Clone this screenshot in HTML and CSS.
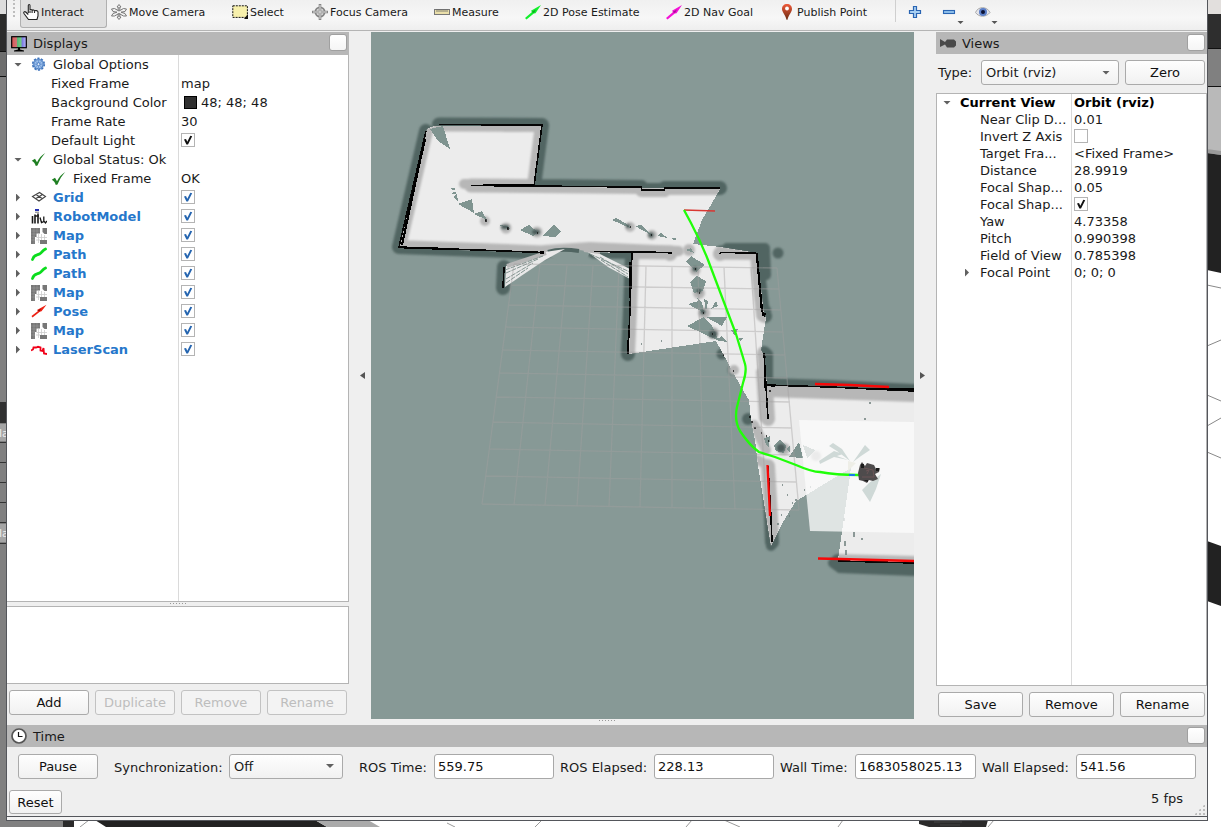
FILE: index.html
```html
<!DOCTYPE html>
<html lang="en">
<head>
<meta charset="utf-8">
<title>RViz</title>
<link rel="stylesheet" href="styles.css">
</head>
<body>
<svg class="defs" width="0" height="0">
  <defs>
    <symbol id="check" viewBox="0 0 14 14"><rect x=".5" y=".5" width="13" height="13" fill="#fff" stroke="#b4b4b4"/><path d="M3 6.400 5 6 6.300 8.800 9.300 2.800 11.200 3.200 7 11.400 5.400 11.400z" fill="currentColor"/></symbol>
    <symbol id="nocheck" viewBox="0 0 14 14"><rect x=".5" y=".5" width="13" height="13" fill="#fff" stroke="#b4b4b4"/></symbol>
    <symbol id="ok" viewBox="0 0 16 16"><path d="M.8 8.800 4 6.800 6 10.300C8 6.400 10.300 3.400 14.200 1 11.200 4.300 8.500 8.500 6.500 13.600L4.800 14C4 11.800 2.800 9.700.8 8.800z" fill="#1f7f22"/></symbol>
    <symbol id="map" viewBox="0 0 16 16"><path d="M0 0H9V5.500H5.500V9H4V16H0zM11.500 0H16V6H13.500L11.500 4zM9 12H16V16H9z" fill="#777"/><path d="M5.500 9.500H16M7.500 6V15M10.500 6V12M13.500 7V12M5 12H9" stroke="#ccc" fill="none" stroke-width=".8"/><path d="M0 3H9M0 6H5M0 9H4M0 12H4M3 0V16M6 0V5" stroke="#aaa" stroke-width=".4"/></symbol>
    <symbol id="path" viewBox="0 0 16 16"><path d="M1.500 12.500C3 7 5.500 8.500 8.500 7S11 3.500 14.500 2" fill="none" stroke="#0bdc1d" stroke-width="2.800" stroke-linecap="round"/></symbol>
    <symbol id="arrow" viewBox="0 0 16 16"><path d="M0 14 7 8 6 6.800 16 1 10.500 9.300 8.800 9.600 1.500 15.500z" fill="currentColor"/><path d="M6.500 8 11 5.500 9 9z" fill="#000" opacity=".3"/></symbol>
  </defs>
</svg>

<svg class="desktop" viewBox="0 0 1221 827">
  <rect width="1221" height="827" fill="#fff"/>
  <rect width="8" height="827" fill="#808080"/><rect width="8" height="14" fill="#ddd"/><rect y="14" width="8" height="37" fill="#2b2b2b"/><rect y="51" width="8" height="25" fill="#6e6e6e"/><path d="M0 51.500H7M0 76.500H7" stroke="#111"/>
  <rect y="402" width="8" height="21" fill="#303030"/><path d="M0 442.500H7M0 462.500H7M0 482.500H7M0 502.500H7M0 522.500H7M0 543.500H7" stroke="#333"/>
  <rect y="424" width="6" height="17" fill="#a5a5a5"/><rect y="524" width="6" height="18" fill="#a5a5a5"/>
  <text x="-1" y="437" class="scrap">la</text><text x="-1" y="537" class="scrap">la</text>
  <rect y="820" width="64" height="7" fill="#808080"/><rect x="63" y="820" width="11" height="7" fill="#2b2b2b"/>
  <path d="M95 820H315L327 827H106z" fill="#222"/><path d="M315 820H368L380 827H327z" fill="#aaa"/><path d="M80 827 89 820M447 823 455 827M535 827 542 820M686 827 692 820M724 820 740 827M838 827 843 820M988 827 994 820" fill="none" stroke="#999"/>
  <path d="M919 820H988L986 827H929L919 824z" fill="#2a2a2a"/><path d="M934 822h28M940 825h20" stroke="#444"/>
  <rect x="1207" width="14" height="14" fill="#e2dfdd"/><rect x="1207" y="14" width="14" height="35" fill="#2e2e2e"/><path d="M1207 48.500H1221M1207 86.500H1221" stroke="#111"/><rect x="1207" y="49" width="14" height="37" fill="#808080"/><path d="M1207 87H1221V154L1207 149z" fill="#b9b9b9"/><path d="M1207 149 1221 151V155L1207 153z" fill="#999"/><path d="M1207 153 1221 155V273L1207 270z" fill="#222"/>
  <path d="M1207 285 1221 288M1207 346 1221 340M1207 395 1221 401M1207 426 1221 418M1207 452 1221 458" stroke="#888"/><path d="M1207 541 1221 546V606L1207 601z" fill="#222"/>
</svg>

<div class="window">
  <header class="toolbar">
    <span class="handle"></span>
    <div class="tool active t1"><svg viewBox="0 0 16 16"><path d="M5.300 9V1.600C5.300.2 7 .2 7 1.600V6.500C7.200 5 9 5.200 9 6.700 9.500 5.500 11.500 5.700 11.500 7.200 12 6 15 6.500 15 8V12L14 15.500H5.500L1 9.500C.2 8 1.700 7 2.700 8L5.300 10.500M7 7V9M9.100 7V9M11.500 7.500V9" fill="#fff" stroke="#222" stroke-width="1.100"/></svg>Interact</div>
    <div class="tool t2"><svg viewBox="0 0 16 16"><path d="M8 .5 10 3H8.800V6.500M8 .5 6 3H7.200V6.500M8 15.500 10 13H8.800V9.500M8 15.500 6 13H7.200V9.500M.5 5 3.500 4.500 8 7 12.500 4.500 15.500 5 14 7.500 10 8.200 14 9.500 15.500 12 12.500 12 8 9.500 3.500 12 .5 12 2 9.500 6 8.200 2 7.500z" fill="#f2f2f2" stroke="#777"/></svg>Move Camera</div>
    <div class="tool t3"><svg viewBox="0 0 16 16"><rect x=".8" y="1.800" width="14.600" height="11.600" fill="#f7f0ac" stroke="#111" stroke-dasharray="2 1"/><path d="M16 10V15H12z" fill="#111"/></svg>Select</div>
    <div class="tool t4"><svg viewBox="0 0 16 16"><circle cx="8" cy="8" r="4.600" fill="#ddd" stroke="#858585" stroke-width="1.800"/><path d="M8 0V16M0 8H16" stroke="#858585" stroke-width="2.600"/><path d="M8 1V15M1 8H15" stroke="#e8e8e8" stroke-width=".9"/></svg>Focus Camera</div>
    <div class="tool t5"><svg viewBox="0 0 16 16"><rect x=".5" y="5.500" width="15" height="5" fill="#eadfaa" stroke="#777"/><path d="M3 5V8M5 5V8M7 5V8M9 5V8M11 5V8M13 5V8" stroke="#666" stroke-width=".8"/></svg>Measure</div>
    <div class="tool t6"><svg class="green" viewBox="0 0 16 16"><use href="#arrow"/></svg>2D Pose Estimate</div>
    <div class="tool t7"><svg class="magenta" viewBox="0 0 16 16"><use href="#arrow"/></svg>2D Nav Goal</div>
    <div class="tool t8"><svg viewBox="0 0 16 16"><defs><linearGradient id="pin" x2="0" y2="1"><stop stop-color="#ef5a3a"/><stop offset="1" stop-color="#6a2c12"/></linearGradient></defs><path d="M8 0C11 0 13 2 13 5 13 8 9.500 11 8.500 15.800H7.500C6.500 11 3 8 3 5 3 2 5 0 8 0z" fill="url(#pin)"/><circle cx="8" cy="4.500" r="1.900" fill="#fff"/></svg>Publish Point</div>
    <span class="rule"></span>
    <svg class="mini plus" viewBox="0 0 14 14"><path d="M5.500 1.500H8.500V5.500H12.500V8.500H8.500V12.500H5.500V8.500H1.500V5.500H5.500z" fill="#a9d0f2" stroke="#2a65b3" stroke-width="1.200"/></svg>
    <svg class="mini minus" viewBox="0 0 22 22"><rect x="1.500" y="7.500" width="11" height="3" fill="#8fc0ec" stroke="#2a65b3" stroke-width="1.100"/><path d="M15.500 18H21.500L18.500 21z" fill="#555"/></svg>
    <svg class="mini eye" viewBox="0 0 24 22"><path d="M1.500 9.500C4 3 13 3 16 9.500 12 14.500 5 14.500 1.500 9.500z" fill="#e4e4ea" stroke="#aaa"/><circle cx="9" cy="9" r="4" fill="#5b7fc8"/><circle cx="9" cy="9" r="2" fill="#0c1233"/><path d="M17.500 18H23.500L20.500 21z" fill="#555"/></svg>
  </header>

  <main class="workspace">
    <section class="dock displays">
      <div class="title"><svg viewBox="0 0 16 16"><defs><linearGradient id="rgb"><stop stop-color="#d55"/><stop offset=".35" stop-color="#c77"/><stop offset=".4" stop-color="#5b7"/><stop offset=".65" stop-color="#7c8"/><stop offset=".7" stop-color="#77d"/><stop offset="1" stop-color="#bbf"/></linearGradient></defs><rect x=".7" y=".7" width="14.600" height="11" fill="url(#rgb)" stroke="#000" stroke-width="1.200"/><path d="M7 12H9V13.500L13 14.500V15.500H3V14.500L7 13.500z" fill="#000"/></svg><span>Displays</span><i class="box"></i></div>
      <div class="tree left-tree">
        <div class="row"><i class="down"></i><svg class="ico" viewBox="0 0 16 16"><circle cx="7.500" cy="7.200" r="5.800" fill="#9dc0ec" stroke="#3c72bb" stroke-width="1.600" stroke-dasharray="2.200 1.440"/><circle cx="7.500" cy="7.200" r="4.600" fill="#9dc0ec" stroke="#5080c0"/><path d="M7.500 3V11.400M3.300 7.200H11.700M4.500 4.200 10.500 10.200M10.500 4.200 4.500 10.200" stroke="#6592d0" stroke-width=".8"/><circle cx="7.500" cy="7.200" r="1.500" fill="#e5effb" stroke="#4a7fc6"/></svg><span class="name">Global Options</span></div>
        <div class="row prop"><span class="name">Fixed Frame</span><span class="value">map</span></div>
        <div class="row prop"><span class="name">Background Color</span><span class="value"><i class="swatch"></i>48; 48; 48</span></div>
        <div class="row prop"><span class="name">Frame Rate</span><span class="value">30</span></div>
        <div class="row prop"><span class="name">Default Light</span><span class="value"><svg class="cb dark"><use href="#check"/></svg></span></div>
        <div class="row"><i class="down"></i><svg class="ico"><use href="#ok"/></svg><span class="name">Global Status: Ok</span></div>
        <div class="row sub"><svg class="ico"><use href="#ok"/></svg><span class="name">Fixed Frame</span><span class="value">OK</span></div>
        <div class="row display"><i class="right"></i><svg class="ico" viewBox="0 0 16 16"><path d="M1.500 6.500 8.500 2.500 14.500 6.500 8 11zM5 4.500 11.500 8.700M11.500 4.500 4.500 8.700" fill="none" stroke="#444" stroke-width="1.100"/></svg><span class="name">Grid</span><span class="value"><svg class="cb"><use href="#check"/></svg></span></div>
        <div class="row display"><i class="right"></i><svg class="ico" viewBox="0 0 16 16"><path d="M4 0H8V2H4z" fill="#2330b0"/><path d="M4 3.200H8" stroke="#777"/><path d="M1.500 7V14.500M4 5.500V14.500M7 4.500V14.500M4 7H8" stroke="#181818" stroke-width="1.600"/><path d="M9 8.500 10.500 13.500 12.800 12.500V7.500M12.800 12 14.500 14 16 12" stroke="#181818" stroke-width="1.300" fill="none"/></svg><span class="name">RobotModel</span><span class="value"><svg class="cb"><use href="#check"/></svg></span></div>
        <div class="row display"><i class="right"></i><svg class="ico"><use href="#map"/></svg><span class="name">Map</span><span class="value"><svg class="cb"><use href="#check"/></svg></span></div>
        <div class="row display"><i class="right"></i><svg class="ico"><use href="#path"/></svg><span class="name">Path</span><span class="value"><svg class="cb"><use href="#check"/></svg></span></div>
        <div class="row display"><i class="right"></i><svg class="ico"><use href="#path"/></svg><span class="name">Path</span><span class="value"><svg class="cb"><use href="#check"/></svg></span></div>
        <div class="row display"><i class="right"></i><svg class="ico"><use href="#map"/></svg><span class="name">Map</span><span class="value"><svg class="cb"><use href="#check"/></svg></span></div>
        <div class="row display"><i class="right"></i><svg class="ico red" viewBox="0 0 16 16"><path d="M.5 12 7 7 6 6 15.500.8 10.500 7.300 8.800 7.800 1.500 13.500z" fill="currentColor"/><path d="M6.500 6.500 10 4.500 8.500 7.500z" fill="#500" opacity=".6"/></svg><span class="name">Pose</span><span class="value"><svg class="cb"><use href="#check"/></svg></span></div>
        <div class="row display"><i class="right"></i><svg class="ico"><use href="#map"/></svg><span class="name">Map</span><span class="value"><svg class="cb"><use href="#check"/></svg></span></div>
        <div class="row display"><i class="right"></i><svg class="ico" viewBox="0 0 16 16"><path d="M0 8.500 2 7.500 2.500 5.500 5 5.500 7 4.800 9.500 5.500 9.500 8.500 11.500 9 12.500 6 13 11.500 16 12" fill="none" stroke="#f00018" stroke-width="1.800"/></svg><span class="name">LaserScan</span><span class="value"><svg class="cb"><use href="#check"/></svg></span></div>
      </div>
      <div class="grip"></div>
      <div class="info"></div>
      <div class="buttons"><button>Add</button><button disabled>Duplicate</button><button disabled>Remove</button><button disabled>Rename</button></div>
    </section>
    <div class="splitter"><i class="fold-left"></i></div>

    <svg class="scene" viewBox="371 32 543 687">
      <defs>
        <path id="walls" d="M439 124.500 542 125 534 186M471 185.500 641 187 642 190H664L665 188 720 188M426 131 399 247 543 252.500M594 251.500 671 252.500 670 254M632 252.500 630 310 628 354M720 254 721 252.500 756 253M757 253 759 280 763 315 765 316M764 353 768 419M766 385 830 387 914 391M768 466 771 517 772 542M838 561 914 563M504 267 503 288"/>
        <path id="free" d="M427 129 434 126 541 126 534 186 641 188 720 189 708 210 702 220 693 244 720 247 757 253 764 315 766 318 761 350 764 355 767 385 914 391V563L838 560 851 468 824 484 808 494 796 501 783 522 771 546 758 466 755 440 751 420 749 400 740 385 716 341 629 354 632 253 584 252 545 253 399 248z"/>
        <clipPath id="freeclip"><use href="#free"/></clipPath>
        <filter id="soft"><feGaussianBlur stdDeviation=".8"/></filter>
      </defs>
      <rect x="371" y="32" width="543" height="687" fill="#879996"/>
      <g filter="url(#soft)"><use href="#walls" fill="none" stroke="#516562" stroke-width="14" stroke-linecap="round" stroke-linejoin="round"/>
        <path d="M727 248H765M765 249 766 275M766 310V317M768 354V380M833 563 840 568 914 571M545 252H574M771 530V546" fill="none" stroke="#516562" stroke-width="10" stroke-linecap="round"/>
        <circle cx="778" cy="253" r="5.500" fill="#516562"/><circle cx="722" cy="354" r="5.500" fill="#516562"/><circle cx="733" cy="370" r="5.500" fill="#647673"/><circle cx="748" cy="419" r="6" fill="#516562"/></g>
      <use href="#free" fill="#ececec" shape-rendering="crispEdges"/>
      <g clip-path="url(#freeclip)"><g filter="url(#soft)"><use href="#walls" fill="none" stroke="#b7b7b7" stroke-width="14" stroke-linecap="round" stroke-linejoin="round"/>
        <path d="M545 250 590 247 679 251M767 392 914 397M464 184H480M505 127H520M754 425 766 450M761 372 764 418M758 460 767 465" fill="none" stroke="#b7b7b7" stroke-width="10" stroke-linecap="round"/></g></g>
      <path d="M545 254Q570 246 590 252L585 262 560 262z" fill="#879996"/><path d="M548 252Q560 248 579 251" stroke="#516562" stroke-width="4" fill="none"/>
      <path d="M506 266 545 252 565 249 545 260 524 274 505 287zM585 250 596 252 630 269V279L608 267z" fill="#e9e9e9"/>
      <path d="M507 266 546 253M584 250 600 252" stroke="#b7b7b7" stroke-width="4"/>
      <path d="M506 273 538 259M506 279 533 263M506 283 528 268M505 270 543 256M600 257 628 274M601 260 628 277M590 254 630 272" stroke="#788c88" stroke-width=".9" stroke-dasharray="5 1"/>
      <g fill="#b7b7b7" filter="url(#soft)"><circle cx="485" cy="221" r="5"/><circle cx="506" cy="228" r="5.500"/><circle cx="537" cy="232" r="5.500"/><circle cx="630" cy="227" r="5"/><circle cx="652" cy="235" r="5"/><circle cx="689" cy="250" r="6"/><circle cx="695" cy="270" r="5.500"/><circle cx="699" cy="293" r="6"/><circle cx="704" cy="313" r="6"/><circle cx="713" cy="333" r="6"/><circle cx="784" cy="449" r="6"/><circle cx="734" cy="370" r="5"/><circle cx="816" cy="456" r="5"/></g>
      <g fill="#7f9490" shape-rendering="crispEdges"><path d="M430 129 443 126 450 149 438 141z"/><path d="M451 188h4v2h-3zM453 192h3v2h-4zM453 197 457 194V200zM456 200 458 197V202zM458 204 472 199 474 213zM474 214 482 211 487 220zM499 225 507 226 510 229zM520 230 529 225 538 232 533 236zM543 236 554 224 561 232 555 237zM612 220 616 218 627 224 630 228zM635 226 641 225 653 236zM657 236 661 233 668 238zM672 238h4v2h-3zM685 250 691 248 694 253zM686 262 691 256 705 265 696 272zM690 282 697 276 706 281 703 291 694 293zM688 304 699 301 704 313zM697 298 702 302 704 313zM704 299 708 301 706 312zM711 309 716 301 718 306zM687 326 704 317 712 326 719 341zM706 317 727 317 722 326zM716 340 722 336 727 342zM731 330 738 329 735 336zM739 338 743 338 740 342zM789 457 799 442 803 458z"/><path d="M774 445 780 440 786 446 784 453 776 451zM764 438 770 436 769 448 766 444zM786 449 790 445 790 452zM803 445 815 450 807 458z"/></g>
      <g fill="#4c5c5a" filter="url(#soft)"><circle cx="781" cy="448" r="4"/><ellipse cx="536" cy="232" rx="4" ry="2.500"/><ellipse cx="505" cy="227" rx="4" ry="2"/><circle cx="651" cy="235" r="2.500"/><circle cx="628" cy="226" r="2"/><circle cx="695" cy="269" r="2.500"/><circle cx="699" cy="291" r="2.500"/><circle cx="703" cy="312" r="2.500"/><circle cx="713" cy="334" r="4"/></g>
      <path d="M485 220h1v2M507 228h1v2M537 233h1M630 227h1M651 235h1M695 269h1M699 293h1M703 313h1M712 334h1M723 355h1M733 371h1M749 417h2M751 422h2M754 428h2M761 433h1M766 436h1M768 441h1M769 391h2M764 357h2" stroke="#111" stroke-width="1.500" fill="none"/>
      <path d="M782 485h1M787 495h1M792 503h1M795 500h2M804 490h1M810 487h1M781 515h1M777 524h2M789 516h1M869 403h2M864 419h2M844 518v3M854 532v5M845 541v5M846 550v5M861 539h2M641 344h1M661 341h1" stroke="#6b7c79" stroke-width="1.500"/>
      <use href="#walls" fill="none" stroke="#050505" stroke-width="1.600" shape-rendering="crispEdges"/>
      <path d="M425 139 418 170 402 245M630 262V298M628 340 628 352M757 256 762 312M765 365V388M540 252.500H544M762 314H766M668 253H672M483 185H534M404 247.500 450 249M768 385 775 386M870 389H914" stroke="#000" stroke-width="2.200" fill="none" shape-rendering="crispEdges"/>
      <g fill="none" stroke="#a19fa0" stroke-opacity=".42" stroke-width="1.300"><path d="M514 264 482 504M540 264 514 505M567 265 545 505M593 265 577 506M619 266 609 507M646 266 640 507M672 266 672 508M698 267 704 508M724 267 735 509M751 268 767 510M777 268 799 510M514 264 777 268M511 285 779 289M508 305 781 310M505 327 783 332M502 350 785 355M499 373 787 378M496 397 790 402M493 422 792 428M490 449 794 455M486 476 796 482M482 504 799 510"/></g>
      <path d="M799 420 914 422V533L810 531z" fill="#fbfbfb" fill-opacity=".76"/>
      <path d="M819 461 834 451 843 454 837 456 848 460 834 457 820 464zM829 446 833 443 842 449 850 461 837 451zM865 445 870 450 861 456 853 462zM862 490 869 483 881 474 876 489 870 502z" fill="#cfd9d7"/>
      <path d="M848 461 856 463 848 471z" fill="#eeeee7"/>
      <path d="M684 210 715 211" stroke="#d93732" stroke-width="1.600"/>
      <path d="M815 384 850 385 889 387M767.500 465 770 516M818 558.500 840 559 914 561" fill="none" stroke="#f80808" stroke-width="2.300"/>
      <path d="M684 210 691 223Q701 242 708 260L736 334 745 364Q747 371 743 383L737 407Q734 420 740 431 750 446 759 452L775 457 796 465Q812 472 820 472 835 475 859 475" fill="none" stroke="#20ff08" stroke-width="2.300"/>
      <path d="M849 475H855" stroke="#197bea" stroke-width="2"/>
      <path d="M860 465 862 462 865 466 867 463 874 465 876 469 880 468 879 472 875 474 878 479 873 481 869 480 867 483 863 481 859 480 858 473z" fill="#4e4b4c"/><path d="M861 464h3v4h-3zM863 480h5v2zM876 468h3v3h-3z" fill="#1b1b1b"/><path d="M866 471 869 470 867 474M864 468 873 470 874 477 862 477" stroke="#6b5557" fill="none"/>
    </svg>

    <div class="splitter narrow"><i class="fold-right"></i></div>
    <section class="dock views">
      <div class="title"><svg viewBox="0 0 16 16"><path d="M0 4 5 7 7 4.500H14L16 6.500V10.500L14 12.500H7L5 9.500 0 12z" fill="#494949"/></svg><span>Views</span><i class="box"></i></div>
      <div class="type"><span>Type:</span><div class="combo">Orbit (rviz)<i class="down"></i></div><button>Zero</button></div>
      <div class="tree right-tree">
        <div class="row head"><i class="down"></i><span class="name">Current View</span><span class="value">Orbit (rviz)</span></div>
        <div class="row"><span class="name">Near Clip D...</span><span class="value">0.01</span></div>
        <div class="row"><span class="name">Invert Z Axis</span><span class="value"><svg class="cb"><use href="#nocheck"/></svg></span></div>
        <div class="row"><span class="name">Target Fra...</span><span class="value">&lt;Fixed Frame&gt;</span></div>
        <div class="row"><span class="name">Distance</span><span class="value">28.9919</span></div>
        <div class="row"><span class="name">Focal Shap...</span><span class="value">0.05</span></div>
        <div class="row"><span class="name">Focal Shap...</span><span class="value"><svg class="cb dark"><use href="#check"/></svg></span></div>
        <div class="row"><span class="name">Yaw</span><span class="value">4.73358</span></div>
        <div class="row"><span class="name">Pitch</span><span class="value">0.990398</span></div>
        <div class="row"><span class="name">Field of View</span><span class="value">0.785398</span></div>
        <div class="row"><i class="right"></i><span class="name">Focal Point</span><span class="value">0; 0; 0</span></div>
      </div>
      <div class="buttons"><button>Save</button><button>Remove</button><button>Rename</button></div>
    </section>
  </main>

  <div class="grip center"></div>
  <section class="time">
    <div class="title"><svg viewBox="0 0 16 16"><circle cx="8" cy="8" r="7" fill="#fff" stroke="#555" stroke-width="1.700"/><path d="M7.500 4V8.500H11.500" fill="none" stroke="#111" stroke-width="1.200"/></svg><span>Time</span><i class="box"></i></div>
    <div class="fields"><button>Pause</button><label class="sync">Synchronization:</label><div class="combo">Off<i class="down"></i></div><label class="l1">ROS Time:</label><output>559.75</output><label class="l2">ROS Elapsed:</label><output>228.13</output><label class="l3">Wall Time:</label><output class="wide">1683058025.13</output><label class="l4">Wall Elapsed:</label><output>541.56</output></div>
  </section>
  <footer class="status"><button>Reset</button><span>5 fps</span><i class="resize"></i></footer>
  <div class="frame-edge"></div>
</div>
</body>
</html>
```
FILE: styles.css
```css
* { box-sizing: border-box; }
body { margin: 0; width: 1221px; height: 827px; overflow: hidden; font: 13px/17px "DejaVu Sans", sans-serif; color: #1a1a1a; }
.defs, .desktop { position: absolute; left: 0; top: 0; }
.desktop { width: 1221px; height: 827px; z-index: -1; }
.scrap { font: 11px "DejaVu Sans", sans-serif; fill: #eee; }
svg { flex: none; }
i { display: block; flex: none; }

.window { margin-left: 6px; width: 1202px; height: 821px; border: 1px solid #54565b; border-top: 0; background: #efefef; display: flex; flex-direction: column; }

.toolbar { height: 31px; flex: none; display: flex; align-items: flex-start; border-bottom: 1px solid #b4b4b4; background: linear-gradient(#f0f0f0, #f7f7f7 60%, #eee); font-size: 11px; }
.handle { width: 13px; height: 19px; background: radial-gradient(circle, #bbb 0.7px, transparent 0.9px) 5px 2px / 4px 4px repeat; clip-path: inset(0 3px 0 5px); }
.tool { height: 28px; padding: 0 0 4px 3px; display: flex; align-items: center; gap: 2px; white-space: nowrap; flex: none; }
.tool svg { width: 16px; height: 16px; }
.tool.active { border: 1px solid #b0b0b0; border-top: 0; border-radius: 0 0 3px 3px; background: #dfdfdf; padding-left: 2px; padding-bottom: 3px; }
.t1 { width: 87px; }
.t2 { width: 122px; padding-left: 4px; }
.t3 { width: 80px; }
.t4 { width: 122px; }
.t5 { width: 91px; }
.t6 { width: 141px; }
.t7 { width: 113px; }
.t8 { width: 119px; }
.green { color: #12f02c; }
.magenta { color: #f312d6; }
.red { color: #ee2114; }
.rule { width: 1px; height: 22px; background: #cfcfcf; }
.mini { width: 14px; height: 14px; margin: 5px 0 0 12px; }
.minus { width: 22px; height: 22px; margin: 3px 0 0 20px; }
.eye { width: 24px; height: 22px; margin: 3px 0 0 10px; }

.workspace { height: 688px; flex: none; display: flex; padding-top: 1px; }
.dock { display: flex; flex-direction: column; height: 687px; }
.displays { width: 342px; }
.title { height: 23px; flex: none; background: #b7b7b7; display: flex; align-items: center; padding: 0 2px 0 4px; gap: 6px; }
.title svg { width: 16px; height: 16px; }
.title span { flex: 1; }
.box { width: 18px; height: 17px; margin-top: -2px; border: 1px solid #a0a0a0; border-radius: 3px; background: linear-gradient(#fff, #f5f5f5); }
.tree { background: #fff; border: 1px solid #b4b4b4; }
.row { display: flex; align-items: center; }
.name { white-space: nowrap; }
.value { display: flex; align-items: center; margin-left: auto; white-space: nowrap; flex: none; }
.cb { width: 14px; height: 14px; margin-bottom: 1px; color: #2565b0; }
.cb.dark { color: #111; }
.down { width: 8px; height: 4px; background: #606060; clip-path: polygon(0 0, 100% 0, 50% 100%); }
.right { width: 4px; height: 8px; background: #606060; clip-path: polygon(0 0, 100% 50%, 0 100%); }
.left-tree { height: 547px; flex: none; border-top: 0; border-left: 0; background: linear-gradient(#dadada, #dadada) 171px 0 / 1px 100% no-repeat #fff; }
.left-tree .row { height: 19px; padding-left: 7px; }
.left-tree .down { margin-right: 9px; }
.left-tree .right { margin: 0 11px 0 2px; }
.ico { width: 16px; height: 16px; margin-right: 6px; }
.left-tree .value { width: 167px; height: 15px; }
.left-tree .prop { padding-left: 44px; }
.left-tree .sub { padding-left: 44px; }
.display .name { font-weight: bold; color: #2577cb; }
.swatch { width: 13px; height: 13px; background: #303030; border: 1px solid #000; margin: 0 4px 0 3px; }
.grip { height: 4px; flex: none; background: radial-gradient(circle, #999 0.6px, transparent 0.8px) 0 0 / 3px 3px; width: 18px; align-self: center; clip-path: inset(0 0 1px 0); }
.info { height: 78px; border: 1px solid #b4b4b4; border-left: 0; background: #fff; flex: none; }
button { font: inherit; color: #111; padding: 0; height: 25px; border: 1px solid #aaa; border-radius: 3px; background: linear-gradient(#fefefe, #f1f1f1); }
button:disabled { color: #bdbdbd; border-color: #c2c2c2; background: #f3f3f3; }
.buttons { display: flex; gap: 6px; }
.displays .buttons { padding: 6px 0 0 2px; }
.displays .buttons button { width: 80px; }

.splitter { width: 22px; padding: 340px 0 0 11px; }
.splitter.narrow { padding-left: 6px; }
.splitter i { width: 5px; height: 7px; background: #555; }
.fold-left { clip-path: polygon(100% 0, 100% 100%, 0 50%); }
.fold-right { clip-path: polygon(0 0, 100% 50%, 0 100%); }
.scene { width: 543px; height: 687px; }

.views { width: 271px; }
.views .title { height: 22px; }
.type { display: flex; align-items: center; height: 39px; padding: 0 0 2px 2px; }
.type span { width: 43px; }
.combo { height: 25px; border: 1px solid #aaa; border-radius: 3px; background: linear-gradient(#fefefe, #f1f1f1); display: flex; align-items: center; justify-content: space-between; padding: 0 8px 0 4px; }
.type .combo { width: 138px; }
.type button { width: 80px; margin-left: 6px; }
.right-tree { height: 593px; flex: none; background: linear-gradient(#dadada, #dadada) 134px 0 / 1px 100% no-repeat #fff; }
.right-tree .row { height: 17px; padding-left: 43px; }
.right-tree .value { width: 132px; }
.right-tree .head { font-weight: bold; padding-left: 6px; color: #000; }
.right-tree .head .down { margin-right: 9px; }
.right-tree .row > .right { margin: 0 11px 0 -15px; }
.views .buttons { padding: 6px 2px 0 2px; }
.views .buttons button { flex: 1; }

.grip.center { height: 6px; clip-path: inset(1px 0 2px 0); }
.time .title { height: 22px; }
.fields { display: flex; align-items: center; height: 40px; padding: 0 0 2px 11px; }
.fields button { width: 80px; }
.fields .combo { width: 114px; }
.fields label { white-space: nowrap; padding-top: 2px; }
.sync { width: 115px; margin-left: 16px; }
.l1 { width: 75px; margin-left: 16px; }
.l2 { width: 94px; margin-left: 6px; }
.l3 { width: 75px; margin-left: 6px; }
.l4 { width: 94px; margin-left: 6px; }
output { width: 120px; height: 25px; flex: none; border: 1px solid #a8a8a8; border-radius: 3px; background: #fff; padding: 3px 3px; color: #111; }
output.wide { width: 121px; }
.status { flex: 1; display: flex; padding: 3px 0 0 2px; }
.status button { width: 53px; height: 24px; }
.status span { margin-left: auto; }
.resize { width: 13px; height: 13px; margin: 13px 1px 0 10px; background: radial-gradient(circle, #bbb 0.7px, transparent 0.9px) right bottom / 4px 4px; clip-path: polygon(100% 0, 100% 100%, 0 100%); }
.frame-edge { height: 4px; flex: none; border-top: 1px solid #54565b; background: #f4f4f4; }
```
